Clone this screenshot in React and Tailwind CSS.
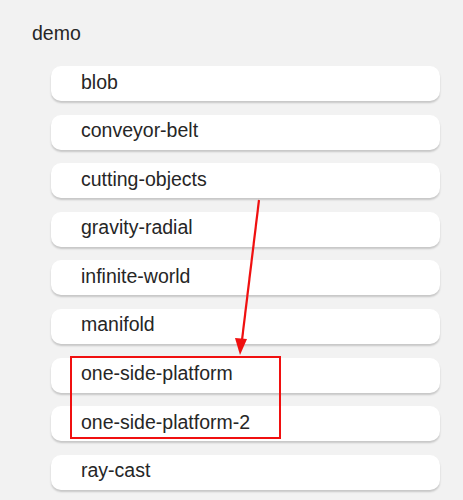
import React from "react";

const demos = [
  "blob",
  "conveyor-belt",
  "cutting-objects",
  "gravity-radial",
  "infinite-world",
  "manifold",
  "one-side-platform",
  "one-side-platform-2",
  "ray-cast",
];

const App = () => {
  return (
    <div
      className="relative w-[463px] h-[500px] overflow-hidden bg-[#f2f2f2] text-[#262626]"
      style={{ fontFamily: '"Liberation Sans", Arial, sans-serif' }}
    >
      <div className="pl-[32px] pt-[21px] text-[19.5px] leading-[24px]">demo</div>

      <ul className="mt-[21px] ml-[51px] w-[389px] flex flex-col gap-[13.6px]">
        {demos.map((name) => (
          <li
            key={name}
            className="h-[35px] rounded-[10px] bg-white pl-[30px] pt-[3.5px] text-[19.5px] leading-[24px] shadow-[0_2px_2px_rgba(0,0,0,0.18)]"
          >
            {name}
          </li>
        ))}
      </ul>

      {/* annotation overlay */}
      <div className="absolute left-[70px] top-[356px] w-[211px] h-[83px] border-2 border-[#f01010]" />
      <svg className="absolute left-0 top-0" width="463" height="500">
        <line x1="259" y1="200" x2="242" y2="340" stroke="#f01010" strokeWidth="2.2" />
        <polygon points="240,355 235,338 247,339" fill="#f01010" />
      </svg>
    </div>
  );
};

export default App;
